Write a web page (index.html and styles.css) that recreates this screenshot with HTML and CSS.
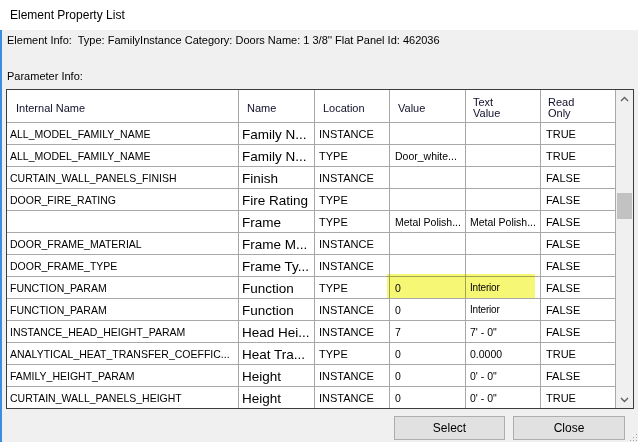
FILE: index.html
```html
<!DOCTYPE html>
<html>
<head>
<meta charset="utf-8">
<title>Element Property List</title>
<link rel="stylesheet" href="styles.css">
</head>
<body>
<div class="window">
  <div class="titlebar">Element Property List</div>
  <div class="client">
    <div class="info">Element Info:&nbsp; Type: FamilyInstance Category: Doors Name: 1 3/8'' Flat Panel Id: 462036</div>
    <div class="param">Parameter Info:</div>
    <div class="grid">
      <div class="table">
        <div class="row head">
          <div class="cell h one">Internal Name</div>
          <div class="cell h one">Name</div>
          <div class="cell h one">Location</div>
          <div class="cell h one">Value</div>
          <div class="cell h two">Text<br>Value</div>
          <div class="cell h two">Read<br>Only</div>
        </div>
        <div class="row">
          <div class="cell int">ALL_MODEL_FAMILY_NAME</div><div class="cell nm">Family N...</div><div class="cell loc">INSTANCE</div><div class="cell val"></div><div class="cell txt"></div><div class="cell ro">TRUE</div>
        </div>
        <div class="row">
          <div class="cell int">ALL_MODEL_FAMILY_NAME</div><div class="cell nm">Family N...</div><div class="cell loc">TYPE</div><div class="cell val">Door_white...</div><div class="cell txt"></div><div class="cell ro">TRUE</div>
        </div>
        <div class="row">
          <div class="cell int">CURTAIN_WALL_PANELS_FINISH</div><div class="cell nm">Finish</div><div class="cell loc">INSTANCE</div><div class="cell val"></div><div class="cell txt"></div><div class="cell ro">FALSE</div>
        </div>
        <div class="row">
          <div class="cell int">DOOR_FIRE_RATING</div><div class="cell nm">Fire Rating</div><div class="cell loc">TYPE</div><div class="cell val"></div><div class="cell txt"></div><div class="cell ro">FALSE</div>
        </div>
        <div class="row">
          <div class="cell int"></div><div class="cell nm">Frame</div><div class="cell loc">TYPE</div><div class="cell val">Metal Polish...</div><div class="cell txt wide">Metal Polish...</div><div class="cell ro">FALSE</div>
        </div>
        <div class="row">
          <div class="cell int">DOOR_FRAME_MATERIAL</div><div class="cell nm">Frame M...</div><div class="cell loc">INSTANCE</div><div class="cell val"></div><div class="cell txt"></div><div class="cell ro">FALSE</div>
        </div>
        <div class="row">
          <div class="cell int">DOOR_FRAME_TYPE</div><div class="cell nm">Frame Ty...</div><div class="cell loc">INSTANCE</div><div class="cell val"></div><div class="cell txt"></div><div class="cell ro">FALSE</div>
        </div>
        <div class="row marked">
          <div class="cell int">FUNCTION_PARAM</div><div class="cell nm">Function</div><div class="cell loc">TYPE</div><div class="cell val">0</div><div class="cell txt">Interior</div><div class="cell ro">FALSE</div>
          <div class="highlight"></div>
        </div>
        <div class="row">
          <div class="cell int">FUNCTION_PARAM</div><div class="cell nm">Function</div><div class="cell loc">INSTANCE</div><div class="cell val">0</div><div class="cell txt">Interior</div><div class="cell ro">FALSE</div>
        </div>
        <div class="row">
          <div class="cell int">INSTANCE_HEAD_HEIGHT_PARAM</div><div class="cell nm">Head Hei...</div><div class="cell loc">INSTANCE</div><div class="cell val">7</div><div class="cell txt wide">7' - 0"</div><div class="cell ro">FALSE</div>
        </div>
        <div class="row">
          <div class="cell int">ANALYTICAL_HEAT_TRANSFER_COEFFIC...</div><div class="cell nm">Heat Tra...</div><div class="cell loc">TYPE</div><div class="cell val">0</div><div class="cell txt wide">0.0000</div><div class="cell ro">TRUE</div>
        </div>
        <div class="row">
          <div class="cell int">FAMILY_HEIGHT_PARAM</div><div class="cell nm">Height</div><div class="cell loc">INSTANCE</div><div class="cell val">0</div><div class="cell txt wide">0' - 0"</div><div class="cell ro">FALSE</div>
        </div>
        <div class="row last">
          <div class="cell int">CURTAIN_WALL_PANELS_HEIGHT</div><div class="cell nm">Height</div><div class="cell loc">INSTANCE</div><div class="cell val">0</div><div class="cell txt wide">0' - 0"</div><div class="cell ro">TRUE</div>
        </div>
      </div>
      <div class="scrollbar">
        <div class="arrow">
          <svg width="9" height="6" viewBox="0 0 9 6"><path d="M1 5 L4.5 1.5 L8 5" fill="none" stroke="#606060" stroke-width="1.4"/></svg>
        </div>
        <div class="track"><div class="thumb"></div></div>
        <div class="arrow">
          <svg width="9" height="6" viewBox="0 0 9 6"><path d="M1 1 L4.5 4.5 L8 1" fill="none" stroke="#606060" stroke-width="1.4"/></svg>
        </div>
      </div>
    </div>
    <div class="buttons">
      <div class="btn">Select</div>
      <div class="btn">Close</div>
    </div>
    <svg class="grip" width="10" height="10" viewBox="0 0 10 10">
      <rect x="8" y="2" width="1" height="1" fill="#a8a8a8"/>
      <rect x="5" y="5" width="1" height="1" fill="#a8a8a8"/>
      <rect x="8" y="5" width="1" height="1" fill="#a8a8a8"/>
      <rect x="2" y="8" width="1" height="1" fill="#a8a8a8"/>
      <rect x="5" y="8" width="1" height="1" fill="#a8a8a8"/>
      <rect x="8" y="8" width="1" height="1" fill="#a8a8a8"/>
    </svg>
  </div>
</div>
</body>
</html>
```

FILE: styles.css
```css
* { box-sizing: border-box; }
html, body { margin: 0; padding: 0; }
body {
  width: 638px;
  height: 442px;
  overflow: hidden;
  background: #f0f0f0;
  color: #000;
  font-family: "Liberation Sans", Arial, sans-serif;
}
.window {
  display: flex;
  flex-direction: column;
  width: 638px;
  height: 442px;
}
.titlebar {
  height: 30px;
  flex: none;
  background: #fff;
  padding-left: 10px;
  display: flex;
  align-items: center;
  font-size: 12px;
  color: #000;
}
.client {
  flex: 1;
  position: relative;
  background: #f0f0f0;
  border-left: 2px solid #3b8de4;
  padding-left: 4px;
  display: flex;
  flex-direction: column;
}
.info {
  font-size: 11px;
  line-height: 13px;
  margin: 4px 0 0 1px;
  white-space: nowrap;
}
.param {
  font-size: 11px;
  line-height: 13px;
  margin: 23px 0 0 1px;
}
.grid {
  margin-top: 6px;
  width: 628px;
  height: 320px;
  border: 1px solid #3c3c3c;
  background: #fff;
  display: flex;
}
.table {
  width: 609px;
  display: flex;
  flex-direction: column;
}
.row {
  position: relative;
  display: grid;
  grid-template-columns: 232px 76px 75px 76px 75px 75px;
  height: 22px;
  border-bottom: 1px solid #a8a8a8;
}
.row.head { height: 33px; }
.row.last { height: 21px; border-bottom: none; }
.cell {
  border-right: 1px solid #a8a8a8;
  display: flex;
  align-items: center;
  white-space: nowrap;
  overflow: hidden;
  position: relative;
  z-index: 1;
}
.cell.h {
  font-size: 11px;
  line-height: 11px;
  padding: 3px 0 0 8px;
  color: #10102a;
}
.cell.h.one { padding-top: 5px; }
.cell.h:first-child { padding-left: 9px; }
.cell.two { padding-left: 7px; }
.cell.int { font-size: 10.5px; padding-left: 3px; }
.cell.nm { font-size: 13.5px; padding: 2px 0 0 3px; }
.cell.loc { font-size: 11px; padding-left: 4px; }
.cell.val { font-size: 10.5px; padding-left: 5px; }
.cell.txt { font-size: 10px; padding-left: 4px; letter-spacing: -0.2px; }
.cell.txt.wide { font-size: 10.5px; letter-spacing: 0; }
.cell.ro { font-size: 11px; padding-left: 5px; }
.highlight {
  position: absolute;
  left: 380px;
  top: -3px;
  width: 148px;
  height: 24px;
  background: #f7f776;
  mix-blend-mode: multiply;
  z-index: 2;
  pointer-events: none;
}
.scrollbar {
  width: 17px;
  background: #f0f0f0;
  display: flex;
  flex-direction: column;
}
.arrow {
  height: 17px;
  flex: none;
  display: flex;
  align-items: center;
  justify-content: center;
}
.track {
  flex: 1;
  padding: 86px 1px 0 1px;
}
.thumb {
  height: 26px;
  background: #c2c2c2;
}
.buttons {
  display: flex;
  justify-content: flex-end;
  gap: 8px;
  margin-top: 7px;
  padding-right: 13px;
}
.btn {
  width: 111px;
  height: 24px;
  background: #e1e1e1;
  border: 1px solid #adadad;
  display: flex;
  align-items: center;
  justify-content: center;
  font-size: 12px;
  color: #000;
}
.btn + .btn { width: 112px; }
.grip {
  position: absolute;
  right: 0;
  bottom: 0;
}
```
